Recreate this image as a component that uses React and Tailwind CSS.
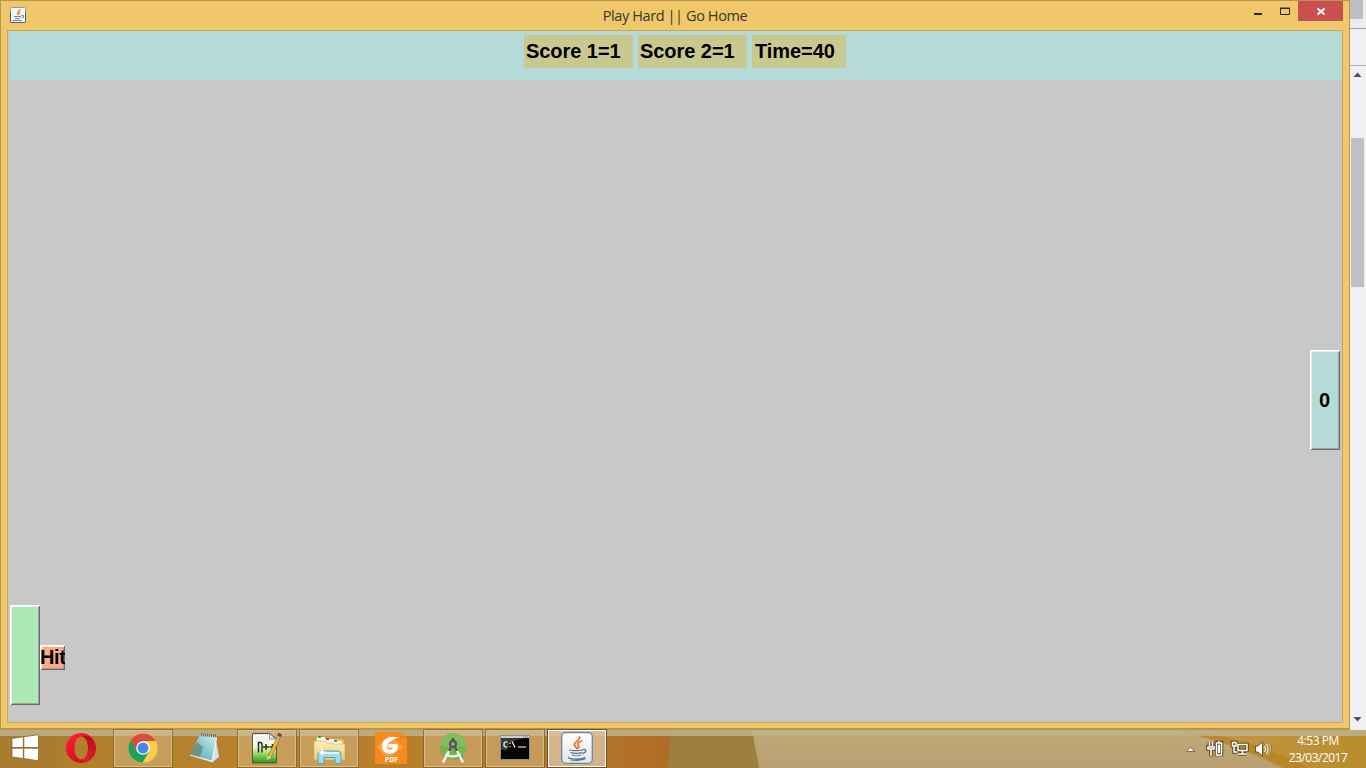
import React from "react";

function JavaCup({ className }) {
  return (
    <svg className={className} viewBox="0 0 32 32">
      <defs>
        <linearGradient id="javaTile" x1="0" y1="0" x2="0" y2="1">
          <stop offset="0" stopColor="#ffffff" />
          <stop offset="1" stopColor="#e3e5e8" />
        </linearGradient>
      </defs>
      <rect x="0.7" y="0.7" width="30.6" height="30.6" rx="4" fill="url(#javaTile)" stroke="#6686a0" strokeWidth="1.3" />
      <path d="M18.500 5c1.500 3-6 5-5 8 .3 1.500 2 2 2.500 3.500M20.500 9c-4 1.500-4.500 3-3 5 .6.800.3 1.700-.6 2.300" fill="none" stroke="#e9711c" strokeWidth="1.700" strokeLinecap="round" />
      <path d="M8.500 18c3 .9 10 .9 13 0M10 20.500c2 1.200 8.500 1.200 10.500 0M11.500 23c2 1 6 1 8 0M22 17.600c4-1 4 2.500-.5 4M8 25.300c-2.500 2 13 2.500 16 .2M10 28c5 .6 10 .4 14-1" fill="none" stroke="#4f7896" strokeWidth="1.200" strokeLinecap="round" />
    </svg>
  );
}

function SmallJava() {
  return (
    <svg className="h-4 w-4" viewBox="0 0 16 16">
      <rect x="0.5" y="0.5" width="15" height="15" rx="1" fill="#f4f4f4" stroke="#8ba0ae" />
      <path d="M.5 5v9.500q0 1 1 1h13q1 0 1-1V5" fill="none" stroke="#46637b" />
      <path d="M10 2c.5 2-3 2.500-2.500 4.500l1 1.500M10.500 5q-2 1-1.500 3" fill="none" stroke="#e98330" strokeWidth="1.300" />
      <path d="M4 9.500h7M5 11.500h5M3 13.500h9M11.500 8.500h2v2h-2" fill="none" stroke="#6788a0" />
    </svg>
  );
}

function WindowsLogo() {
  return (
    <svg className="h-7 w-7" viewBox="0 0 28 28">
      <path d="M1 4.500l11.300-1.700v10.700H1zM12.800 2.700L27.500.7v12.800H12.800zM1 14.200h11.300v10.400L1 23zM12.800 14.200h14.700v12.600l-14.700-2.200z" fill="#fff" stroke="#8b6528" strokeWidth=".8" />
    </svg>
  );
}

function Opera() {
  return (
    <svg className="h-8 w-8" viewBox="0 0 32 32">
      <defs>
        <linearGradient id="operaRed" x1="0" y1="0" x2="0.7" y2="1">
          <stop offset="0" stopColor="#ff2638" />
          <stop offset="0.5" stopColor="#ed1026" />
          <stop offset="1" stopColor="#c3121d" />
        </linearGradient>
        <linearGradient id="operaShade" x1="0" y1="0" x2="0" y2="1">
          <stop offset="0" stopColor="#8f0d18" />
          <stop offset="1" stopColor="#ed2638" />
        </linearGradient>
      </defs>
      <path fillRule="evenodd" fill="url(#operaRed)" d="M16 1a15 15 0 1 0 0 30a15 15 0 1 0 0-30M16.300 4.500c4.300 0 6.700 5 6.700 11.500s-2.400 11.500-6.700 11.500S9.500 22.500 9.500 16s2.500-11.500 6.800-11.500" />
      <path d="M17 4.500c4-2 8 0 10 3 5 7 3 16-3 20-3 2-5 2-7 0 4-1 6-6 6-11.500S21 5.500 17 4.500" fill="url(#operaShade)" opacity=".7" />
    </svg>
  );
}

function Chrome() {
  return (
    <svg className="h-8 w-8" viewBox="0 0 32 32">
      <circle cx="16" cy="16" r="14.700" fill="#f9ce4b" />
      <path d="M3.500 8.300A14.700 14.700 0 0 1 28.800 9H16L9.500 19.500z" fill="#d94b3b" />
      <path d="M3.500 8.300A14.700 14.700 0 0 0 15.500 30.700L22 19.500 10 19.500z" fill="#1fa05b" />
      <circle cx="16" cy="16" r="6.800" fill="#fff" />
      <circle cx="16" cy="16" r="5.500" fill="#4688f1" />
    </svg>
  );
}

function Notepad() {
  return (
    <svg className="h-8 w-8" viewBox="0 0 32 32">
      <defs>
        <linearGradient id="notepadBlue" x1="0" y1="1" x2="1" y2="0">
          <stop offset="0" stopColor="#55a0ae" />
          <stop offset="0.5" stopColor="#83c6d1" />
          <stop offset="1" stopColor="#d8eff2" />
        </linearGradient>
      </defs>
      <path d="M26.500 4l4 21-7 5.500-4-4z" fill="#deded8" stroke="#7e7b6c" strokeWidth=".6" />
      <path d="M11 3l16.500 1.500-4.500 25L.8 22.500z" fill="url(#notepadBlue)" />
      <path d="M27 5l-4 23.500 1 1.500L28 6z" fill="#f7f7f5" />
      <path d="M.8 22.500L23 28.500l1 2-23-7z" fill="#edf1ed" />
      <path d="M12 2.800l15.500 1" stroke="#5b686b" strokeWidth="3" strokeDasharray="1 1" />
      <path d="M8 10l6 5-3 10-10-3z" fill="#6b8466" opacity=".7" />
    </svg>
  );
}

function NotepadPlus() {
  return (
    <svg className="h-8 w-8" viewBox="0 0 32 32">
      <defs>
        <linearGradient id="paperGreen" x1="0" y1="0" x2="0" y2="1">
          <stop offset="0" stopColor="#fff" />
          <stop offset="0.45" stopColor="#edf7dc" />
          <stop offset="0.7" stopColor="#93d85c" />
          <stop offset="1" stopColor="#20990f" />
        </linearGradient>
      </defs>
      <path d="M1.500 1.500h17l7 5.500v24h-24z" fill="url(#paperGreen)" stroke="#555" strokeWidth="1" />
      <path d="M4 5h14M4 7h14M4 9h19" stroke="#dde1e5" strokeWidth=".7" />
      <path d="M18.500 1.500v5.500h6z" fill="#e9e9ef" stroke="#777" strokeWidth=".8" />
      <path d="M2 1.500h16" stroke="#555" strokeWidth="1.500" strokeDasharray="1 1" />
      <path d="M7.500 20.500V10.500h2q1.500 0 1.500 2v8M12 15h6M15 12v6M18.500 15h6M21.500 12v6" fill="none" stroke="#292929" strokeWidth="1.500" />
      <path d="M18.500 25L29 3" stroke="#946d19" strokeWidth="4" />
      <path d="M18.500 25L27.500 6" stroke="#f2b62e" strokeWidth="2.700" />
      <path d="M27.300 6.500l1-2" stroke="#a9a7ae" strokeWidth="4" />
      <path d="M28 4l1.200-2.500" stroke="#8e3438" strokeWidth="4" />
      <path d="M16.500 23.500l4 2-4.500 2.500z" fill="#e3ca95" />
    </svg>
  );
}

function Explorer() {
  return (
    <svg className="h-8 w-8" viewBox="0 0 32 32">
      <defs>
        <linearGradient id="folder" x1="0" y1="0" x2="0" y2="1">
          <stop offset="0" stopColor="#fff2b4" />
          <stop offset="1" stopColor="#e9cc70" />
        </linearGradient>
      </defs>
      <path d="M2.500 6.500l2-2h7l2 2h16l2 2v18h-29z" fill="#e0bd5e" stroke="#b6964b" strokeWidth=".7" />
      <path d="M4 5h8v5H4zM12 7h9v4h-9zM20 9h9v3h-9z" fill="#fffbe8" />
      <path d="M5 4h3v2H5z" fill="#20ae31" /><path d="M13 6h3v2h-3z" fill="#e53935" /><path d="M21 8h3v2h-3z" fill="#2594d6" />
      <path d="M1 9h11l2 2h6l1 1h11v16H1z" fill="url(#folder)" stroke="#d3af54" strokeWidth=".7" />
      <path d="M5 31.500V22q0-3 3-3h17q3 0 3 3v9.500h-6v-6H11v6z" fill="#9edbed" stroke="#4da3c6" />
      <path d="M7 21h19" stroke="#dbf5fc" strokeWidth="2" />
      <path d="M9 14l.8 5 4 1-4 1-.8 5-.8-5-4-1 4-1z" fill="#fff" opacity=".9" />
    </svg>
  );
}

function FoxitPdf() {
  return (
    <svg className="h-8 w-8" viewBox="0 0 32 32">
      <path d="M0 0h25v6h7v26H0z" fill="#f68a1e" />
      <path d="M26 0l6 5.500h-6z" fill="#f68a1e" />
      <path d="M2 15L14 3l15 12-13 9H10z" fill="#ffb05e" opacity=".6" />
      <path d="M24 5.500C15 3 7 7 7 14c0 8 9 10 14 5 3-3 2-6 1-7h-8c-2 1-2 4 1 3.500h3c-1 3-5 3-6 0-1-4 5-8 12-10" fill="#fff" />
      <text x="16.500" y="29.500" textAnchor="middle" fontFamily="Open Sans, sans-serif" fontWeight="700" fontSize="7" fill="#fff">PDF</text>
    </svg>
  );
}

function AndroidStudio() {
  return (
    <svg className="h-8 w-8" viewBox="0 0 32 32">
      <circle cx="16" cy="14.500" r="13.300" fill="#72b743" />
      <path d="M2.700 14.500a13.300 13.300 0 0 1 26.600 0z" fill="#83bd62" />
      <path d="M18 17l9 9-5 1-5-8z" fill="#4e8f39" opacity=".6" />
      <path d="M14 15L6 30.500M18 15l8 15.500M8.500 22q7 5 15 0" stroke="#f5f5f5" strokeWidth="2.500" fill="none" />
      <circle cx="16" cy="12" r="3" fill="#aaa" stroke="#555" strokeWidth="2.500" />
      <path d="M16 6v3M14 15l-2 4M18 15l2 4" stroke="#555" strokeWidth="2.600" />
    </svg>
  );
}

function CommandPrompt() {
  return (
    <svg className="h-8 w-8" viewBox="0 0 32 32">
      <rect x="1.500" y="3.500" width="29" height="24" fill="#050505" stroke="#8a9098" />
      <path d="M2 4h28v2H2z" fill="#c5ced5" />
      <path d="M2 6h28Q9 7 8 18H2z" fill="#383838" />
      <path d="M24 5h5" stroke="#456b8d" strokeDasharray="1 1" />
      <path d="M8.500 10H6l-1 1v3l1 1h2.500M11 11v1M11 14v1M13 9.500l1 2 1 2 1 2M19 15h8" stroke="#fff" strokeWidth="1.200" fill="none" />
    </svg>
  );
}

const apps = [
  { name: "opera", Icon: Opera, state: "idle" },
  { name: "chrome", Icon: Chrome, state: "open" },
  { name: "notepad", Icon: Notepad, state: "idle" },
  { name: "notepadplus", Icon: NotepadPlus, state: "open" },
  { name: "explorer", Icon: Explorer, state: "open" },
  { name: "foxit", Icon: FoxitPdf, state: "idle" },
  { name: "studio", Icon: AndroidStudio, state: "open" },
  { name: "cmd", Icon: CommandPrompt, state: "open" },
  { name: "java", Icon: () => <JavaCup className="h-8 w-8" />, state: "active" },
];

const slotStyles = {
  idle: "border-transparent",
  open: "border-[#d6bd8c] bg-[#dbc092]/45 outline outline-[#7e5d2b]/70",
  active: "border-white bg-[#dec2a0]/80 outline outline-[#70502b]",
};

function Score({ children, className }) {
  return <div className={`h-[33px] bg-[#c9c98f] text-[20px] leading-[32px] font-bold tracking-[-0.05px] whitespace-nowrap ${className}`}>{children}</div>;
}

const raised = "shadow-[inset_1px_1px_0_#fff,inset_-1px_-1px_0_#696969,inset_2px_2px_0_#eeeeee,inset_-2px_-2px_0_#a0a0a0]";

function GameWindow() {
  return (
    <section className="flex h-[730px] w-[1350px] flex-col border border-b-2 border-[#b59650] bg-[#f0c86a] pr-[6px] pb-[5px] pl-[6px]">
      <header className="flex h-[29px] shrink-0 items-start">
        <div className="w-[500px] pt-[6px] pl-[3px]"><SmallJava /></div>
        <h1 className="w-[336px] text-center font-['Open_Sans',sans-serif] text-[14.500px] leading-[29px] tracking-[-0.4px] text-[#38352d]">Play Hard || Go Home</h1>
        <div className="flex flex-1 justify-end">
          <svg className="h-5 w-[47px]" viewBox="0 0 47 20"><path d="M3 12h8v2H3z" fill="#292929" /><path d="M29.500 7.500h9v6h-9z" fill="none" stroke="#292929" /><path d="M29 6.500h10v1.500H29z" fill="#292929" /></svg>
          <div className="flex h-5 w-[45px] items-center justify-center bg-[#c85050]">
            <svg className="h-5 w-[45px]" viewBox="0 0 45 20"><path d="M19.500 7.500l7 6M26.500 7.500l-7 6" stroke="#fff" strokeWidth="1.800" /></svg>
          </div>
        </div>
      </header>
      <main className="flex min-h-0 flex-1 flex-col border border-[#cba656] bg-[#c8c8c8] font-['Liberation_Sans',Arial,sans-serif] text-black">
        <div className="ml-[2px] flex h-[49px] shrink-0 gap-[5px] bg-[#b4dbd7] pt-[4px] pl-[514px]">
          <Score className="w-[109px] pl-[2px]">Score 1=1</Score>
          <Score className="w-[109px] pl-[2px]">Score 2=1</Score>
          <Score className="w-[94px] pl-[3px]">Time=40</Score>
        </div>
        <div className="relative flex-1">
          <div className={`absolute top-[270px] left-[1302px] flex h-[100px] w-[30px] items-center justify-center bg-[#b4dbd7] pr-px text-[20px] font-bold ${raised}`}>0</div>
          <div className={`absolute top-[525px] left-[2px] h-[100px] w-[30px] bg-[#ade9b5] ${raised}`} />
          <div className={`absolute top-[565px] left-[32px] h-[25px] w-[25px] overflow-hidden bg-[#fbac83] text-[20px] leading-[24px] font-bold tracking-[-0.4px] ${raised}`}>Hit</div>
        </div>
      </main>
    </section>
  );
}

function BackgroundScroll() {
  return (
    <aside className="flex h-[730px] w-4 flex-col bg-[#f0f0f0]">
      <div className="h-[29px] border-b border-[#a0a0a0] bg-[#ececec] pr-[3px]"><div className="h-[19px] bg-[#bebebe]" /></div>
      <div className="h-[37px] border-b border-[#b0b0b0]" />
      <svg className="h-[18px] w-4" viewBox="0 0 16 18"><path d="M3.500 11h8L7.500 6.500z" fill="#505050" /></svg>
      <div className="mt-[54px] ml-px h-[149px] w-[13px] bg-[#c0c0c0]" />
      <div className="flex-1" />
      <svg className="h-[18px] w-4" viewBox="0 0 16 18"><path d="M3.500 5h8L7.500 9.500z" fill="#505050" /></svg>
    </aside>
  );
}

function TrayIcons() {
  return (
    <svg className="h-8 w-[100px]" viewBox="0 0 100 32">
      <path d="M6.500 17.500h8L10.500 13z" fill="#fff" stroke="#67573a" strokeWidth=".8" />
      <g fill="none" stroke="#5f4a24" strokeWidth="3.600">
        <path d="M29.500 8v4M32.500 8v4M28 12.500h6v2.500h-6zM31 15v7.500M36.500 8.500h5v12h-5zM58 10.500h9v6h-9zM62.500 17v3M58.500 20h7.500M52.500 8.500h3.500v3.500h-3.500zM54 12.500v5.500h3" />
      </g>
      <g fill="none" stroke="#fff" strokeWidth="1.500">
        <path d="M29.500 8v4M32.500 8v4M28 13h6v2h-6zM31 15v7" />
        <path d="M36.500 9h5v12h-5zM38 8h2" />
        <path d="M58 10.500h9v6h-9zM62.500 17v3M58.500 20h7.500" />
        <path d="M52.500 8.500h3.500v3.500h-3.500zM54 12.500v5.500h3" />
      </g>
      <path d="M38 11h2v8h-2z" fill="#fff" />
      <path d="M75.500 12h2.500l4.500-4v14l-4.500-4h-2.500z" fill="#fff" stroke="#6b552d" />
      <path d="M84.500 12q2 3 0 6M86.500 10q3 5 0 10M88.500 8q5 7 0 14" fill="none" stroke="#775d2c" strokeWidth="2" opacity=".5" />
      <path d="M84.500 12q2 3 0 6M86.500 10q3 5 0 10" fill="none" stroke="#fff" strokeWidth="1.100" />
      <path d="M88.500 8.500q4 6.500 0 13" fill="none" stroke="#e3cf99" strokeWidth=".9" />
    </svg>
  );
}

function Taskbar() {
  return (
    <footer className="relative h-[38px]">
      <svg className="absolute inset-0 h-full w-full" viewBox="0 0 1366 38" preserveAspectRatio="none">
        <defs>
          <linearGradient id="leftWood"><stop offset="0" stopColor="#ad7d30" /><stop offset=".35" stopColor="#b9822c" /><stop offset=".8" stopColor="#b47b2b" /><stop offset="1" stopColor="#b06b25" /></linearGradient>
          <linearGradient id="sand" x1="0" y1="0" x2="0" y2="1"><stop offset="0" stopColor="#c0a979" /><stop offset="1" stopColor="#b99f71" /></linearGradient>
          <linearGradient id="gold"><stop offset="0" stopColor="#c4a566" /><stop offset=".35" stopColor="#be953f" /><stop offset="1" stopColor="#b98d2d" /></linearGradient>
        </defs>
        <path d="M0 0h1366v38H0z" fill="url(#sand)" />
        <path d="M0 0h680v38H0z" fill="url(#leftWood)" />
        <path d="M0 0h68l-6 38H0z" fill="#a87c31" opacity=".6" />
        <path d="M672 0h80l7 38h-92z" fill="#9d7f40" />
        <path d="M1178 0h188v38h-84q-45-23-104-38" fill="url(#gold)" />
        <path d="M1186 3q60 14 98 35h24Q1260 12 1205 3z" fill="#b98126" opacity=".75" />
        <path d="M0 0h1366v6H0z" fill="#bdb18c" opacity=".85" />
      </svg>
      <div className="relative flex h-full items-start">
        <div className="flex h-full w-[52px] items-center pb-[2px] pl-[11px]"><WindowsLogo /></div>
        <div className="flex gap-[4px]">
          {apps.map(({ name, Icon, state }) => (
            <div key={name} className={`flex h-[37px] w-[58px] items-center justify-center border pb-[2px] ${slotStyles[state]}`}><Icon /></div>
          ))}
        </div>
        <div className="ml-auto flex h-full pr-[18px] text-white">
          <div className="pt-[4px]"><TrayIcons /></div>
          <div className="ml-[8px] w-[60px] pt-[2px] text-center font-['Open_Sans',sans-serif] text-[12px] leading-[17px] tracking-[-0.5px] whitespace-nowrap"><div>4:53 PM</div><div>23/03/2017</div></div>
        </div>
      </div>
    </footer>
  );
}

export default function App() {
  return (
    <div className="flex h-[768px] w-[1366px] flex-col overflow-hidden">
      <div className="flex"><GameWindow /><BackgroundScroll /></div>
      <Taskbar />
    </div>
  );
}
